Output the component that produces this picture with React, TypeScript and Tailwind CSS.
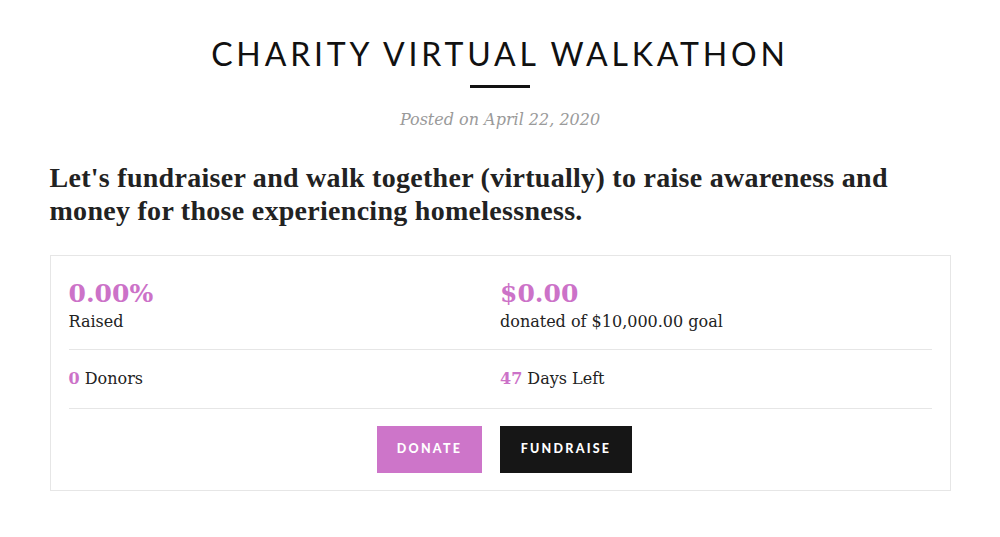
export default function App() {
  return (
    <div className="min-h-[537px] w-full bg-white" style={{ fontFamily: '"DejaVu Serif", serif' }}>
      <div className="mx-auto w-[901px] pt-[38px]">
        {/* header */}
        <h1 className="text-center font-['Lato',sans-serif] text-[32px] font-normal leading-[32px] tracking-[0.12em] text-[#111]">
          CHARITY VIRTUAL WALKATHON
        </h1>
        <div className="mx-auto mt-[15px] h-[3px] w-[60px] bg-[#111]" />
        <p className="mt-[20px] text-center text-[16px] italic leading-[24px] text-[#9a9a9a]">Posted on April 22, 2020</p>

        <h2 className="mt-[29px] max-w-[870px] font-['Liberation_Serif',serif] text-[28px] font-bold leading-[33px] tracking-[0.01em] text-[#222]">
          Let's fundraiser and walk together (virtually) to raise awareness and money for those experiencing homelessness.
        </h2>

        {/* campaign box */}
        <div className="mt-[28px] border border-[#e6e6e6] px-[18px] pb-[17px] pt-[22px]">
          <div className="grid grid-cols-2 border-b border-[#e6e6e6] pb-[15px]">
            <div>
              <div className="text-[25px] font-bold leading-[32px] text-[#cc72c8]">0.00%</div>
              <div className="text-[16px] leading-[24px] text-[#222]">Raised</div>
            </div>
            <div>
              <div className="text-[25px] font-bold leading-[32px] text-[#cc72c8]">$0.00</div>
              <div className="text-[16px] leading-[24px] text-[#222]">donated of $10,000.00 goal</div>
            </div>
          </div>
          <div className="grid grid-cols-2 border-b border-[#e6e6e6] py-[17px] text-[16px] leading-[24px] text-[#222]">
            <div>
              <span className="font-bold text-[#cc72c8]">0</span> Donors
            </div>
            <div>
              <span className="font-bold text-[#cc72c8]">47</span> Days Left
            </div>
          </div>
          <div className="flex justify-center gap-[18px] pl-[9px] pt-[17px]">
            <button className="h-[47px] w-[105px] bg-[#cd75c9] font-['Lato',sans-serif] text-[12.5px] font-black tracking-[0.18em] text-white">
              DONATE
            </button>
            <button className="h-[47px] w-[132px] bg-[#161616] font-['Lato',sans-serif] text-[12.5px] font-black tracking-[0.18em] text-white">
              FUNDRAISE
            </button>
          </div>
        </div>
      </div>
    </div>
  );
}
